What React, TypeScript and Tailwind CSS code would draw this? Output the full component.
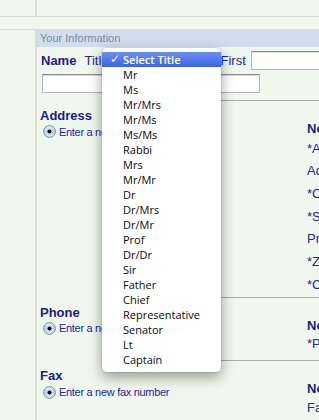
import React from "react";

const items = [
  "Mr","Ms","Mr/Mrs","Mr/Ms","Ms/Ms","Rabbi","Mrs","Mr/Mr","Dr","Dr/Mrs","Dr/Mr","Prof","Dr/Dr","Sir","Father","Chief","Representative","Senator","Lt","Captain",
];

function Radio() {
  return (
    <svg width="13" height="13" viewBox="0 0 13 13" className="shrink-0">
      <defs>
        <linearGradient id="rg" x1="0" y1="0" x2="0" y2="1">
          <stop offset="0" stopColor="#eaf2fc" />
          <stop offset="0.5" stopColor="#b9d0ee" />
          <stop offset="1" stopColor="#d9e8fa" />
        </linearGradient>
      </defs>
      <circle cx="6.5" cy="6.5" r="5.9" fill="url(#rg)" stroke="#6f7f96" strokeWidth="0.9" />
      <circle cx="6.5" cy="6.5" r="2" fill="#111" />
    </svg>
  );
}

function Section({
  title,
  radio,
  right,
  h,
  rowH,
}: {
  title: string;
  radio: string;
  right: string[];
  h: string;
  rowH: string;
}) {
  return (
    <div className={`flex ${h}`}>
      <div className="flex-1 min-w-0 pt-[7px]">
        <div className="pl-[3px] text-[13px] font-bold leading-[15px] whitespace-nowrap">{title}</div>
        <div className="mt-[1px] flex h-[16px] items-center gap-[3px] pl-[6px] text-[11px] tracking-[-0.3px] whitespace-nowrap text-[#2424a0]">
          <Radio />
          <span>{radio}</span>
        </div>
      </div>
      <div className="w-[12px] shrink-0 overflow-hidden whitespace-nowrap pt-[20px] text-[13px]">
        <div className="font-bold leading-[16px]">{right[0]}</div>
        {right.slice(1).map((r) => (
          <div key={r} className={`flex items-center ${rowH} text-[#2424a0]`}>
            {r}
          </div>
        ))}
      </div>
    </div>
  );
}

const inputCls =
  "bg-white border border-[#b4b4b4] border-t-[#8a8a8a] shadow-[inset_0_1px_1px_rgba(0,0,0,0.15)] shrink-0";

export default function App() {
  return (
    <div className="relative w-[319px] h-[420px] overflow-hidden bg-[#f0f7ec] font-['Liberation_Sans',Arial,sans-serif] text-[#1c1c86]">
      <div className="flex h-[17px] border-b border-[#d9ded5]">
        <div className="w-[37px] border-r-2 border-[#d9ddd5]" />
      </div>
      <div className="h-[13px] border-b border-[#dadfd6]" />
      <div className="flex h-[390px]">
        <div className="w-[37px] shrink-0 border-r-2 border-[#d9ddd5]" />
        <div className="flex-1 min-w-0 flex flex-col">
          <div className="h-[17px] bg-[#d1dcec] pl-[3px] text-[11px] leading-[17px] text-[#7b89aa] whitespace-nowrap">
            Your Information
          </div>
          <div className="mt-[4px] flex h-[19px] items-center pl-[4px] text-[13px] whitespace-nowrap">
            <span className="font-bold shrink-0">Name</span>
            <span className="ml-[8px] shrink-0 text-[#2424a0]">Title</span>
            <span className="w-[112px] shrink-0" />
            <span className="shrink-0 text-[#2424a0]">First</span>
            <div className={`ml-[5px] h-[19px] w-[100px] ${inputCls}`} />
          </div>
          <div className={`mt-[4px] ml-[5px] h-[19px] w-[218px] ${inputCls}`} />
          <div className="mt-[7px] ml-[153px] h-px bg-[#a9aba7]" />
          <Section
            title="Address"
            radio="Enter a new address"
            right={["New Address", "*Address Line 1", "Address Line 2", "*City", "*State", "Province", "*Zip", "*Country"]}
            h="h-[200px]"
            rowH="h-[22.7px]"
          />
          <div className="ml-[153px] h-px bg-[#a9aba7]" />
          <Section
            title="Phone"
            radio="Enter a new phone number"
            right={["New Phone", "*Phone"]}
            h="h-[64px]"
            rowH="h-[20px]"
          />
          <div className="ml-[153px] h-px bg-[#a9aba7]" />
          <Section
            title="Fax"
            radio="Enter a new fax number"
            right={["New Fax", "Fax"]}
            h="h-[60px]"
            rowH="h-[20px]"
          />
        </div>
      </div>

      <div className="absolute left-[102px] top-[48px] w-[119px] rounded-[5px] bg-[rgba(255,255,255,0.97)] pt-[4px] pb-[5px] shadow-[0_0_0_1px_rgba(0,0,0,0.08),0_5px_14px_rgba(0,0,0,0.38)] font-['Open_Sans','DejaVu_Sans',sans-serif] text-[11px] font-medium text-[#0a0a0a]">
        <div className="flex h-[15px] items-center bg-gradient-to-b from-[#6d8ff2] to-[#3d62e5] text-white">
          <span className="w-[21px] shrink-0 pl-[8px] font-['DejaVu_Sans',sans-serif] text-[12px] font-bold leading-[15px]">✓</span>
          <span className="font-semibold leading-[15px]">Select Title</span>
        </div>
        {items.map((it) => (
          <div key={it} className="h-[15px] pl-[21px] leading-[15px] whitespace-nowrap">
            {it}
          </div>
        ))}
      </div>
    </div>
  );
}
